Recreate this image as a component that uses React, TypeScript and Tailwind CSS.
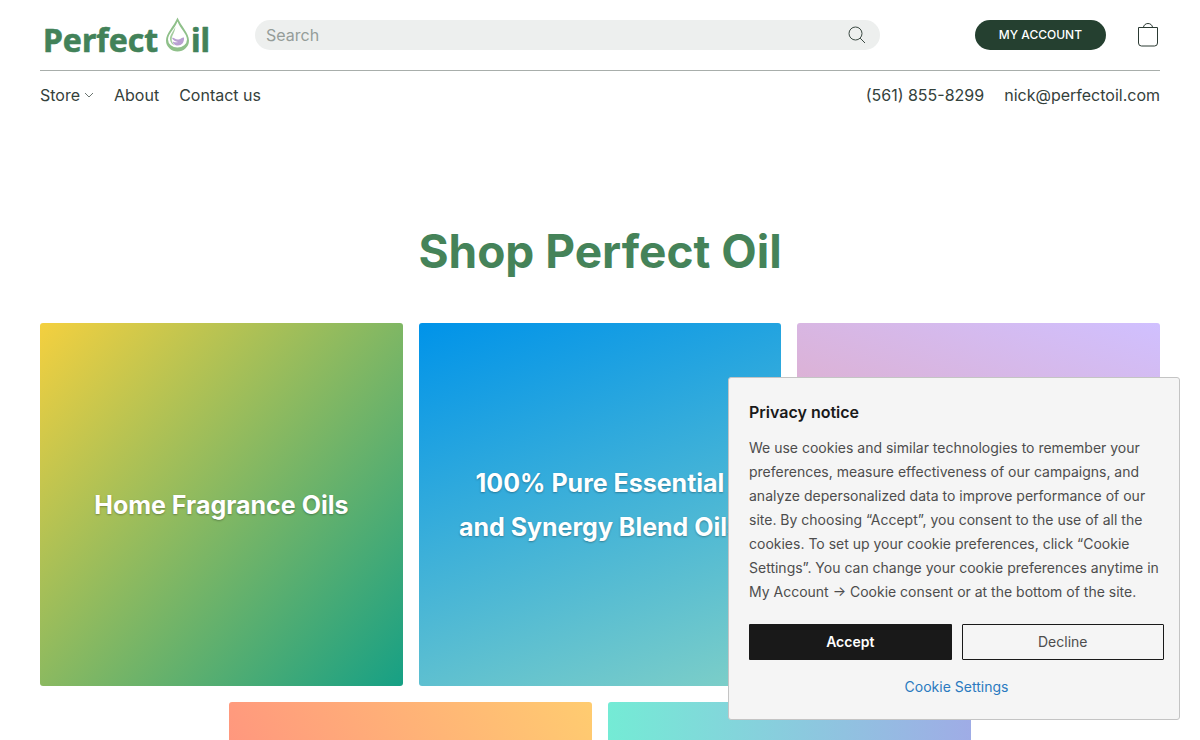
import { useState } from 'react';
import clsx from 'clsx';

interface Category {
  id: string;
  name?: string;
  gradient: string;
}

const CATEGORIES: Category[] = [
  { id: 'home-fragrance', name: 'Home Fragrance Oils', gradient: 'bg-[linear-gradient(132deg,#f4d03f_0%,#16a085_100%)]' },
  {
    id: 'essential',
    name: '100% Pure Essential and Synergy Blend Oils',
    gradient: 'bg-[linear-gradient(160deg,#0093e9_0%,#80d0c7_100%)]',
  },
  { id: 'lilac', gradient: 'bg-[linear-gradient(19deg,#f09a90_0%,#d0c0ff_100%)]' },
  { id: 'peach', gradient: 'bg-[linear-gradient(62deg,#ff8084_0%,#ffcc70_100%)]' },
  { id: 'aqua', gradient: 'bg-[linear-gradient(90deg,#74ebd5_0%,#9face6_100%)]' },
];

function Logo() {
  return (
    <svg width="175" height="50" viewBox="0 0 175 50" role="img" aria-label="Perfect Oil">
      <g
        fill="#428259"
        stroke="#428259"
        strokeWidth="0.600"
        strokeLinejoin="round"
        fontFamily="Noto Sans, sans-serif"
        fontWeight="700"
        fontSize="32"
      >
        <text x="3" y="42">Perfect</text>
        <text x="151" y="42">il</text>
      </g>
      <path d="M137.500 7.500C134 16 126 23 126 30.500a11.500 11 0 0 0 23 0C149 23 141 16 137.500 7.500Z" fill="#8fc08a" />
      <path d="M137.500 11.500C135 18.500 128 24 128 29.500a9.500 8 0 0 0 19 0C147 24 140 18.500 137.500 11.500Z" fill="#fff" />
      <path d="M135.500 17C132 23 129.500 26 130 29.500c.4 3 2 5 4.500 6-2-2.500-3-4.500-2.800-6.500.2-3.500 2.800-6 3.800-12Z" fill="#a5cda0" />
      <path d="M132 28c2-1 3.500 2 6.500 1.500s3.500-2.500 5.500-2c.5 5-2.500 8-6 8s-5-2-5.200-4c2.200 1 4 1 5.200.5-2.500-.5-5-1.500-6-4Z" fill="#b9a0d2" />
    </svg>
  );
}

function Header() {
  return (
    <header className="mx-auto max-w-[1280px] px-10 text-[#34413b]">
      <div className="flex h-[70px] items-center">
        <a href="#home" className="mr-10 shrink-0">
          <Logo />
        </a>
        <form className="flex h-[30px] max-w-[625px] flex-1 items-center rounded-full bg-[#edefee] pr-3 pl-[11px]">
          <input
            type="text"
            aria-label="Search"
            placeholder="Search"
            className="min-w-0 flex-1 bg-transparent text-base outline-none placeholder:text-[#959d99]"
          />
          <button type="button" aria-label="Find">
            <svg width="22" height="22" viewBox="0 0 22 22" fill="none" stroke="#3c4a43">
              <circle cx="9.500" cy="9.500" r="6.500" />
              <path d="M14.100 14.100 19 19" />
            </svg>
          </button>
        </form>
        <button type="button" className="ml-auto h-[30px] rounded-full bg-[#254030] px-6 text-xs font-medium text-white">
          MY ACCOUNT
        </button>
        <button type="button" aria-label="Shopping bag" className="ml-8">
          <svg width="22" height="26" viewBox="0 0 22 26" fill="none" stroke="#2b3a33">
            <path d="M.5 5.500h19v15.500a3 3 0 0 1-3 3h-13a3 3 0 0 1-3-3Z" />
            <path d="M5.500 5.500a4.500 4 0 0 1 9 0" />
          </svg>
        </button>
      </div>
      <nav className="flex h-12 items-center gap-5 border-t border-[#a8aeab]">
        <a href="#store" className="flex items-center gap-1">
          Store
          <svg width="10" height="6" viewBox="0 0 10 6" fill="none" stroke="#6b7570">
            <path d="m1 1 4 4 4-4" />
          </svg>
        </a>
        <a href="#about">About</a>
        <a href="#contact">Contact us</a>
        <a href="tel:+15618558299" className="ml-auto">(561) 855-8299</a>
        <a href="mailto:nick@perfectoil.com">nick@perfectoil.com</a>
      </nav>
    </header>
  );
}

function PrivacyNotice({ onClose }: { onClose: () => void }) {
  return (
    <section
      aria-labelledby="privacy-title"
      className="fixed right-5 bottom-5 w-[452px] max-w-[calc(100%-40px)] rounded-[3px] border border-[#c4c4c4] bg-[#f5f5f5] pt-[22px] pr-[15px] pb-5 pl-5 text-sm leading-6 text-[#4d4d4d]"
    >
      <h2 id="privacy-title" className="mb-3 text-base font-semibold text-[#1a1a1a]">Privacy notice</h2>
      <p>
        We use cookies and similar technologies to remember your preferences, measure effectiveness of our campaigns,
        and analyze depersonalized data to improve performance of our site. By choosing “Accept”, you consent to the use
        of all the cookies. To set up your cookie preferences, click “Cookie Settings”. You can change your cookie
        preferences anytime in My Account → Cookie consent or at the bottom of the site.
      </p>
      <div className="mt-5 grid grid-cols-2 gap-[10px]">
        <button type="button" onClick={onClose} className="h-9 rounded-[1px] bg-[#191919] font-semibold text-white">
          Accept
        </button>
        <button type="button" onClick={onClose} className="h-9 rounded-[1px] border border-[#191919]">
          Decline
        </button>
      </div>
      <button type="button" className="mx-auto mt-[15px] block text-[#2a7ac0]">Cookie Settings</button>
    </section>
  );
}

export default function App() {
  const [showNotice, setShowNotice] = useState(true);

  return (
    <div className="min-h-screen bg-white font-[Inter,sans-serif]">
      <Header />
      <main className="mx-auto max-w-[1280px] px-10 pb-20">
        <h1 className="pt-[103px] pb-[42px] text-center text-[46px] leading-[60px] font-bold text-[#458359]">
          Shop Perfect Oil
        </h1>
        <div className="flex flex-wrap justify-center gap-4">
          {CATEGORIES.map((c) => (
            <a
              key={c.id}
              href={`#${c.id}`}
              className={clsx(
                'flex aspect-square w-[calc((100%-32px)/3)] items-center justify-center rounded-[3px] px-8 pt-[2px] text-center text-[25px] leading-[44px] font-bold text-white text-shadow-[0_1px_2px_rgb(0_0_0/0.3)]',
                c.gradient,
              )}
            >
              {c.name}
            </a>
          ))}
        </div>
      </main>
      {showNotice && <PrivacyNotice onClose={() => setShowNotice(false)} />}
    </div>
  );
}
